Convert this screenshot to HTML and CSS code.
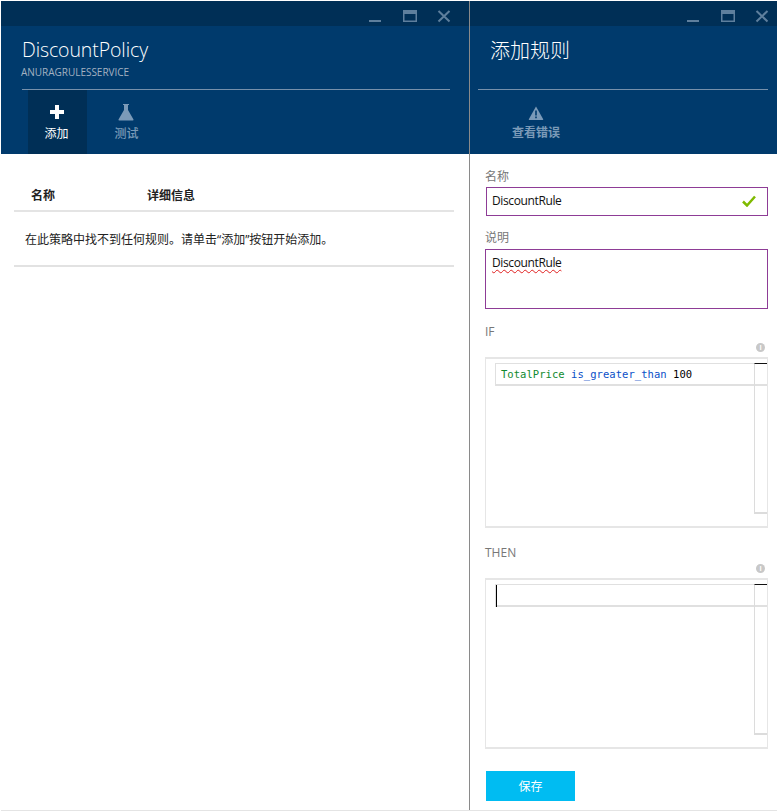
FILE: index.html
```html
<!DOCTYPE html>
<html lang="zh">
<head>
<meta charset="utf-8">
<title>DiscountPolicy</title>
<link rel="stylesheet" href="styles.css">
</head>
<body>
<div class="shell">
  <section class="blade blade-left">
    <div class="titlebar">
      <svg class="ctl" width="84" height="16" viewBox="0 0 84 16"><path d="M2 12h12" stroke-width="2"/><path d="M36.750 1.750h12.500v10.500h-12.500z" stroke-width="1.500"/><path d="M36 3.500h14" stroke-width="3"/><path d="M71.500 2l11 10.500M82.500 2L71.500 12.500" stroke-width="2"/></svg>
    </div>
    <header class="head">
      <h1 class="title">DiscountPolicy</h1>
      <div class="subtitle">ANURAGRULESSERVICE</div>
      <div class="rule"></div>
      <div class="commands">
        <div class="cmd cmd-active">
          <svg width="16" height="16" viewBox="0 0 16 16"><path d="M6 1h4v5h5v4h-5v5H6v-5H1V6h5z" fill="#fff"/></svg>
          <span>添加</span>
        </div>
        <div class="cmd cmd-dim">
          <svg width="18" height="18" viewBox="1 0 18 18"><path d="M6 1h6v1h-1v5l5.500 9.500q.3 1-.8 1H2.300q-1.100 0-.8-1L7 7V2H6z" fill="#7b9ab8"/></svg>
          <span>测试</span>
        </div>
      </div>
    </header>
    <main class="list">
      <div class="list-head"><span class="col-name">名称</span><span>详细信息</span></div>
      <div class="list-empty">在此策略中找不到任何规则。请单击“添加”按钮开始添加。</div>
    </main>
  </section>
  <section class="blade blade-right">
    <div class="titlebar">
      <svg class="ctl ctl-right" width="84" height="16" viewBox="0 0 84 16"><path d="M2 12h12" stroke-width="2"/><path d="M36.750 1.750h12.500v10.500h-12.500z" stroke-width="1.500"/><path d="M36 3.500h14" stroke-width="3"/><path d="M71.500 2l11 10.500M82.500 2L71.500 12.500" stroke-width="2"/></svg>
    </div>
    <header class="head head-right">
      <h1 class="title title-cn">添加规则</h1>
      <div class="rule"></div>
      <div class="commands">
        <div class="cmd cmd-dim cmd-wide">
          <svg width="16" height="16" viewBox="0 0 16 16"><path d="M8 1.500l7.200 12.800q.2.700-.5.700H1.300q-.7 0-.5-.7z" fill="#7b9ab8"/><path d="M7.200 5.500h1.600v5H7.200zM7.200 11.500h1.600v1.700H7.200z" fill="#003a6c"/></svg>
          <span>查看错误</span>
        </div>
      </div>
    </header>
    <form class="form">
      <label class="lbl">名称</label>
      <div class="field field-name"><span>DiscountRule</span>
        <svg width="14" height="12" viewBox="0 0 14 12"><path d="M1 6.500l4 4L13 1.500" fill="none" stroke="#7fba00" stroke-width="2.500"/></svg>
      </div>
      <label class="lbl lbl-desc">说明</label>
      <div class="field field-desc"><span class="squiggle">DiscountRule</span></div>
      <label class="lbl lbl-if">IF</label>
      <div class="info-row"><span class="info">i</span></div>
      <div class="editor">
        <div class="editor-line"><span class="k-green">TotalPrice</span> <span class="k-blue">is_greater_than</span> 100</div>
        <div class="editor-scroll"></div>
      </div>
      <label class="lbl lbl-then">THEN</label>
      <div class="info-row"><span class="info">i</span></div>
      <div class="editor editor-then">
        <div class="editor-line"><span class="caret"></span></div>
        <div class="editor-scroll"></div>
      </div>
      <button class="save" type="button">保存</button>
    </form>
  </section>
</div>
</body>
</html>
```
FILE: styles.css
```css
* { box-sizing: border-box; }
html, body { margin: 0; padding: 0; background: #fff; }
body { font-family: "Open Sans", "Noto Sans CJK SC", sans-serif; width: 778px; height: 812px; overflow: hidden; }
.shell { display: flex; height: 810px; margin: 1px 1px 0 1px; border-bottom: 1px solid #e4e4e4; }
.blade { display: flex; flex-direction: column; }
.blade-left { width: 469px; border-right: 1px solid #8a8a8a; }
.blade-right { flex: 1; min-width: 0; }
.titlebar { height: 25px; background: #002f56; display: flex; justify-content: flex-end; padding: 8px 0 0; }
.ctl { display: block; fill: none; stroke: #5e7f9d; margin-right: 18px; }
.ctl-right { margin-right: 8px; }
.head { height: 128px; background: #003a6c; display: flex; flex-direction: column; padding: 0 19px 0 21px; color: #fff; }
.title { margin: 11px 0 0; font: 300 19.500px/26px "Open Sans", "Noto Sans CJK SC", sans-serif; color: #fff; letter-spacing: -.1px; }
.title-cn { padding-left: 12px; margin-bottom: 26px; font-family: "Noto Sans CJK SC", sans-serif; font-size: 20px; letter-spacing: 0; }
.subtitle { margin: 3px 0 0 -1px; font: 400 10px/12px "Open Sans", sans-serif; color: #a3b1c1; height: 12px; letter-spacing: -.02px; }
.rule { height: 1px; background: #7690ab; margin-top: 11px; }
.head-right { padding: 0 9px 0 8px; }
.head-right .rule { margin-top: 0; }
.commands { display: flex; flex: 1; padding-left: 6px; }
.cmd { width: 59px; display: flex; flex-direction: column; align-items: center; padding-top: 13px; font: 12px/16px "Noto Sans CJK SC", sans-serif; }
.cmd svg { height: 18px; display: block; margin-bottom: 4px; }
.cmd-active { background: #002f56; color: #fff; padding-right: 2px; }
.cmd-dim { color: #7b9ab8; margin-left: 10px; font-weight: 500; }
.cmd-wide { width: 80px; margin-left: 12px; font-weight: 700; padding-top: 14px; }
.cmd-wide svg { margin-bottom: 2px; }
.list { padding: 26px 15px 0 13px; flex: 1; }
.list-head { height: 32px; border-bottom: 2px solid #e4e4e4; font: 700 12px/30px "Noto Sans CJK SC", sans-serif; color: #222; display: flex; }
.col-name { width: 133px; padding-left: 17px; flex: none; }
.list-empty { height: 55px; border-bottom: 2px solid #e2e2e2; font: 12px/55px "Open Sans", "Noto Sans CJK SC", sans-serif; color: #222; padding-left: 11px; }
.form { padding: 13px 9px 0 15px; display: flex; flex-direction: column; flex: 1; }
.lbl { display: block; font: 12px/18px "Noto Sans CJK SC", "Open Sans", sans-serif; color: #777; height: 18px; }
.field { border: 1px solid #8e3c96; font: 12px/24px "Open Sans", sans-serif; color: #111; padding-left: 5px; letter-spacing: -.38px; }
.field-name { height: 29px; margin: 2px 0 0 1px; display: flex; justify-content: space-between; align-items: center; padding: 0 11px 2px 5px; }
.lbl-desc { margin-top: 12px; }
.field-desc { height: 60px; margin-top: 3px; line-height: 26px; padding-left: 6px; }
.squiggle { text-decoration: underline wavy #e02020 1px; text-underline-offset: 2px; }
.lbl-if { margin-top: 14px; font-family: "Open Sans", sans-serif; }
.lbl-then { margin-top: 16px; font-family: "Open Sans", sans-serif; }
.info-row { display: flex; justify-content: flex-end; height: 10px; margin: 2px 0 4px; padding-right: 3px; }
.info { width: 9px; height: 9px; border-radius: 50%; background: #c8c8c8; color: #fff; font: 700 7px/9px "Open Sans", sans-serif; text-align: center; display: block; }
.editor { position: relative; height: 171px; border: 2px solid #e6e6e6; border-width: 2px 1px 2px 1px; }
.editor-line { margin: 4px 0 0 9px; height: 23px; border: 1px solid #e0e0e0; border-width: 1px 0 2px 1px; font: 500 10.500px/21px "DejaVu Sans Mono", monospace; color: #000; padding-left: 5px; letter-spacing: .05px; }
.k-green { color: #0f8a2e; }
.k-blue { color: #0a4fc8; }
.caret { display: block; width: 1px; height: 22px; background: #000; margin-left: -5px; }
.editor-scroll { position: absolute; top: 4px; right: 0; width: 13px; height: 151px; border: 1px solid #dcdcdc; border-top: 1px solid #111; border-bottom-width: 2px; border-right: 0; }
.save { width: 89px; height: 30px; margin: 22px 0 0 1px; background: #00bcf2; border: 0; color: #fff; font: 12px/30px "Noto Sans CJK SC", sans-serif; padding: 0; }
```
